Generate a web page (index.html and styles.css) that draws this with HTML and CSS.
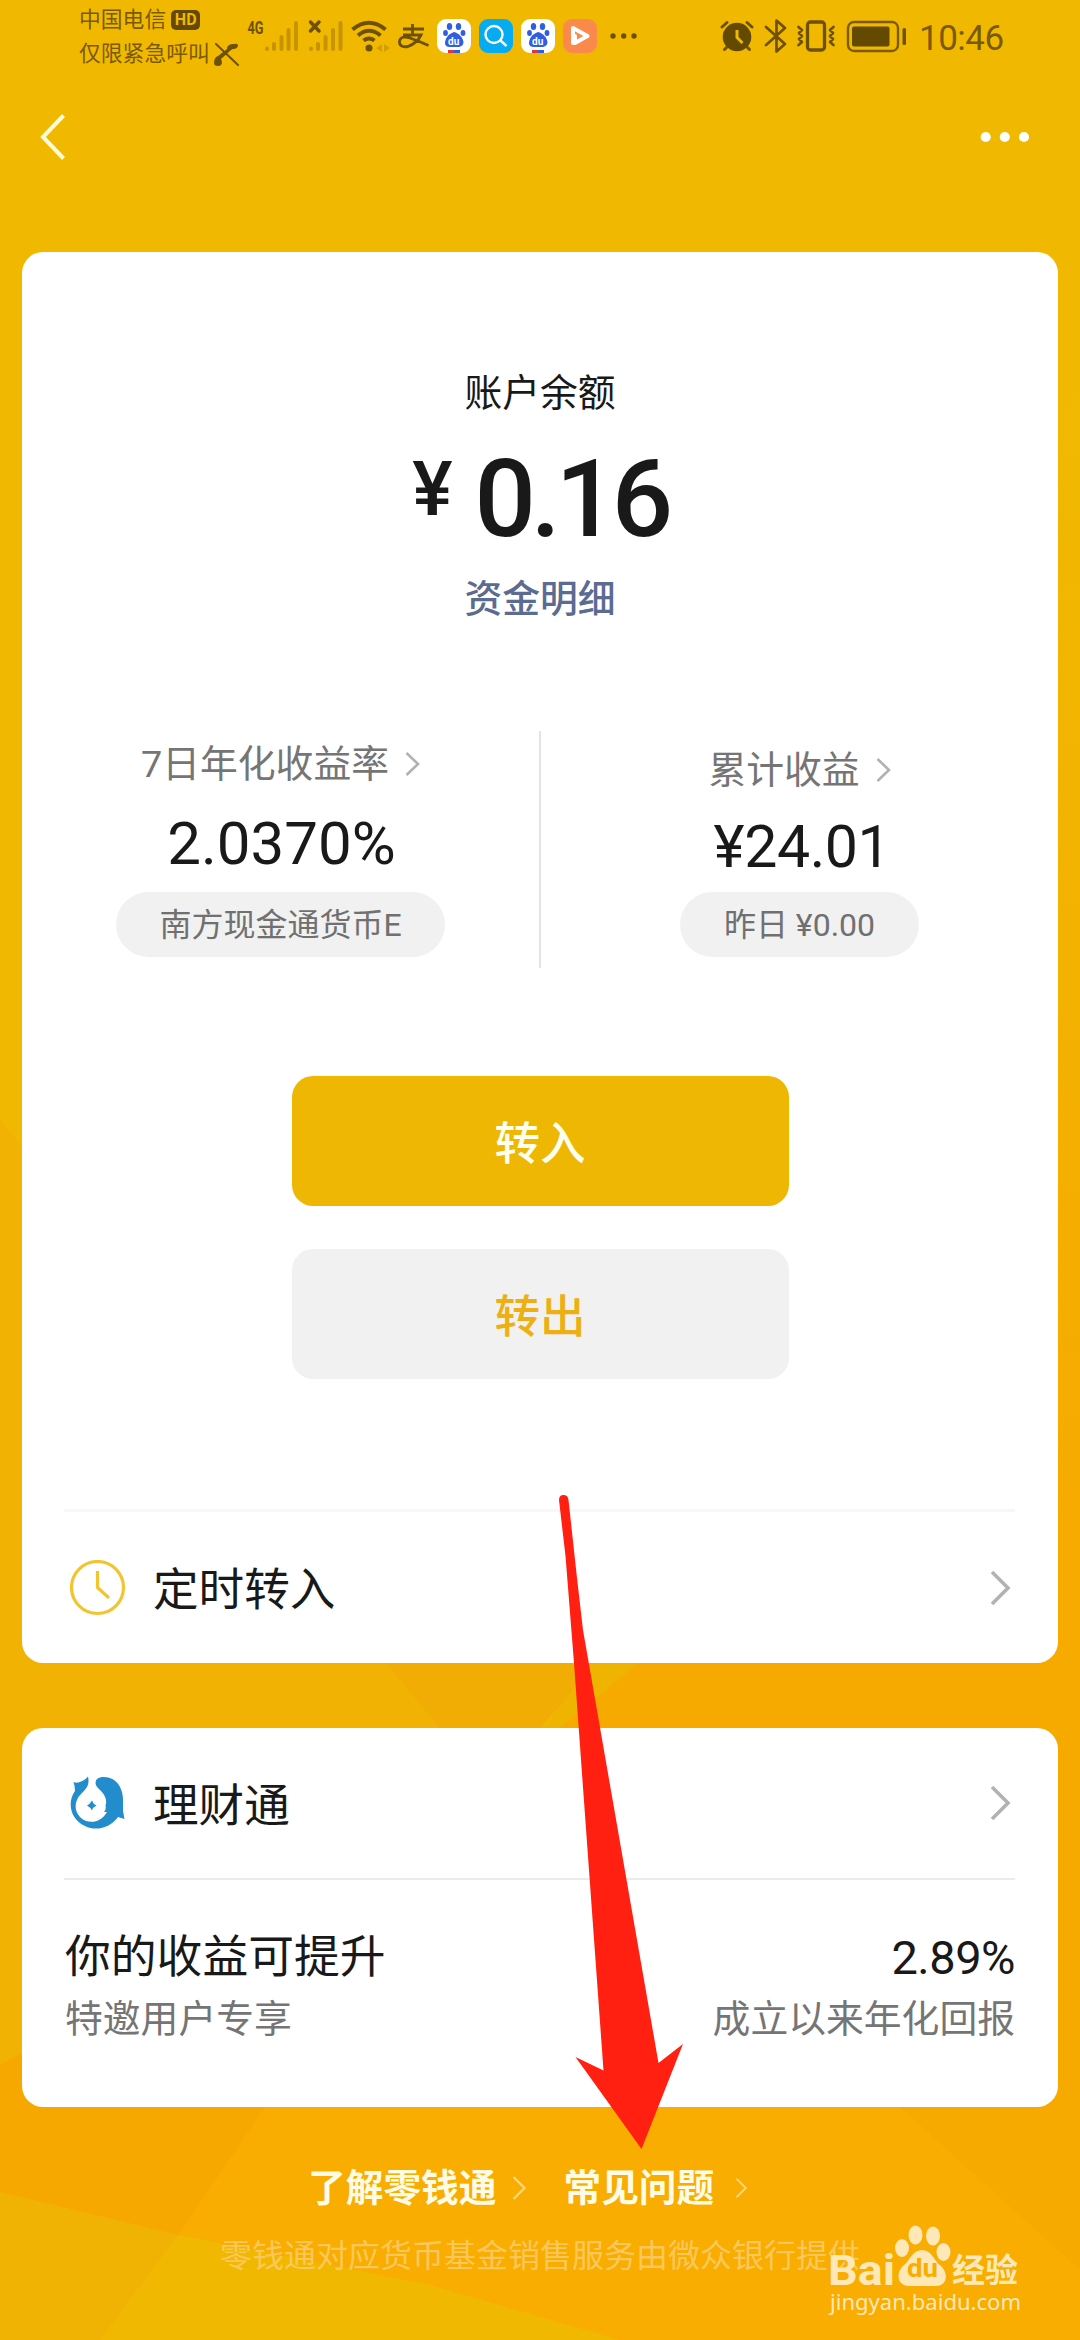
FILE: index.html
```html
<!DOCTYPE html>
<html lang="zh-CN">
<head>
<meta charset="utf-8">
<title>零钱通</title>
<link rel="stylesheet" href="styles.css">
</head>
<body>
<div class="screen">
  <svg class="backdrop" viewBox="0 0 1080 2340" aria-hidden="true">
    <defs>
      <linearGradient id="edge" x1="0" y1="0" x2="0" y2="1">
        <stop offset="0" stop-color="#f0b900"/>
        <stop offset="0.600" stop-color="#f7aa00"/>
        <stop offset="1" stop-color="#f7aa00"/>
      </linearGradient>
    </defs>
    <path d="M0 1120 L400 1600 L560 1740 L0 2065Z" fill="#f1b203"/>
    <path d="M1080 380 L1080 2340 L0 2340 L0 2065 L560 1740 L610 1662Z" fill="url(#edge)"/>
    <path d="M385 1662 L600 1662 L540 1728 L440 1728Z" fill="#f1ad03"/>
    <path d="M592 1662 L640 1662 L560 1728 L545 1728Z" fill="#eeb400"/>
    <path d="M640 1662 L1080 1662 L1080 2340 L0 2340 L0 2065 L30 2060 L560 1728Z" fill="#f8ad00"/>
    <path d="M640 1662 L1080 1662 L1080 2270 L900 2107 L560 1728Z" fill="#f6aa00"/>
    <path d="M0 2065 L30 2050 L265 2107 L178 2235 L0 2192Z" fill="#f6a800"/>
    <path d="M0 2192 L178 2235 L100 2340 L0 2340Z" fill="#f1b303"/>
    <path d="M178 2235 L430 2285 L620 2340 L100 2340Z" fill="#f0b900"/>
  </svg>

  <header class="status">
    <div class="carrier">
      <div class="carrier-line">中国电信<span class="hd">HD</span></div>
      <div class="carrier-line">仅限紧急呼叫<svg class="nocall" viewBox="0 0 26 24"><path d="M2 2L24 23" stroke="#6d5000" stroke-width="2" stroke-linecap="round"/><path d="M20 2C15 2 13 4 13 7L4 14C1 15 0 18 0 21Q0 24 4 24Q8 24 8 20L7 17L17 8L19 7Q24 7 24 3Q23 1 20 2Z" fill="#6d5000"/></svg></div>
    </div>
    <svg width="17" height="72" viewBox="247 0 17 72"><text x="247.500" y="34" font-size="18" font-weight="700" fill="#6d5000" textLength="16" lengthAdjust="spacingAndGlyphs">4G</text></svg>
    <svg width="86" height="72" viewBox="264 0 86 72">
      <g stroke="#c59400" stroke-width="4" stroke-linecap="round"><path d="M267 48.500V49M274 44V49M281.500 37V49M288.500 30V49M296 23V49M311 48.500V49M318 44V49M325.500 37V49M333 30V49M340.500 23V49"/></g>
      <path d="M310.500 22L319 31M319 22L310.500 31" stroke="#6d5000" stroke-width="3.500" stroke-linecap="round"/>
    </svg>
    <svg width="46" height="72" viewBox="350 0 46 72">
      <g fill="none" stroke="#6d5000" stroke-width="4"><path d="M352.500 29.500Q369 16 385.500 29.500M358 35.500Q369 26 380.500 35.500M363.500 40.500Q369 36.500 374.500 40.500"/></g>
      <circle cx="369" cy="48" r="3.500" fill="#6d5000"/>
      <path d="M382 44V52L376 48ZM384 44V52L390 48Z" fill="#d09f00"/>
    </svg>
    <svg width="41" height="72" viewBox="396 0 41 72"><path d="M403 29H424M412.500 24V34M403 35H421Q417 43 408 46.500Q399 48 399.500 41Q401 35 410 38Q421 42 428.500 45.500" fill="none" stroke="#6d5000" stroke-width="2.800"/></svg>
    <svg width="42" height="72" viewBox="437 0 42 72"><g id="paw-app"><rect x="437" y="19" width="34" height="34" rx="9" fill="#fff"/><g fill="#2f5ee4"><ellipse cx="449.500" cy="26.500" rx="2.700" ry="3.600"/><ellipse cx="458.500" cy="26.500" rx="2.700" ry="3.600"/><ellipse cx="445.500" cy="33" rx="2.400" ry="3"/><ellipse cx="463" cy="33" rx="2.400" ry="3"/><path d="M454 32C448 34 445 39 445 43Q445 47 450 47H459Q463.500 46 463.500 42C463 38 459 33 454 32Z"/></g><path d="M448 50H454V53H448Z" fill="#dc3643"/><path d="M454 50H460V53H454Z" fill="#2f5ee4"/><text x="448" y="45" font-size="10" font-weight="700" fill="#fff">du</text></g></svg>
    <svg width="42" height="72" viewBox="479 0 42 72"><rect x="479" y="19" width="34" height="34" rx="9" fill="#05acf2"/><circle cx="494" cy="34.500" r="8.500" fill="none" stroke="#fff" stroke-width="2.400"/><path d="M500.500 40.500L506.500 46" stroke="#fff" stroke-width="2.400"/></svg>
    <svg width="42" height="72" viewBox="437 0 42 72"><use href="#paw-app"/></svg>
    <svg width="42" height="72" viewBox="563 0 42 72"><rect x="563" y="19" width="34" height="34" rx="9" fill="#f98a4b"/><path d="M573 43V28L587.500 36L575 43V36" fill="none" stroke="#fff" stroke-width="4" stroke-linejoin="round" stroke-linecap="round"/></svg>
    <svg width="113" height="72" viewBox="605 0 113 72"><g fill="#6d5000"><circle cx="613" cy="36" r="2.700"/><circle cx="623.700" cy="36" r="2.700"/><circle cx="634" cy="36" r="2.700"/></g></svg>
    <svg width="42" height="72" viewBox="718 0 42 72"><circle cx="737" cy="37" r="14.300" fill="#644900"/><path d="M722 27L727 22.500M752 27L747 22.500M727 47L724.500 49.500M747 47L749.500 49.500" stroke="#6d5000" stroke-width="3" stroke-linecap="round"/><path d="M737 30V37.500L742.500 43" fill="none" stroke="#f0b800" stroke-width="3"/></svg>
    <svg width="34" height="72" viewBox="760 0 34 72"><path d="M766 27L785 44L776.500 51.500V20.500L785 28L766 45" fill="none" stroke="#6d5000" stroke-width="2.700" stroke-linejoin="round" stroke-linecap="round"/></svg>
    <svg width="50" height="72" viewBox="794 0 50 72"><g fill="none" stroke="#6d5000" stroke-linejoin="round" stroke-linecap="round"><rect x="807.500" y="22" width="17" height="28" rx="3" stroke-width="3.300"/><path d="M798.500 27L802 30L799 33L802 36L799 39L802 42L798.500 45M833.500 27L830 30L833 33L830 36L833 39L830 42L833.500 45" stroke-width="2.700"/></g></svg>
    <svg width="74" height="72" viewBox="844 0 74 72"><rect x="848" y="22" width="50" height="29" rx="6" fill="none" stroke="#7b5a00" stroke-width="2.400"/><rect x="852" y="26.500" width="37.500" height="20" rx="2" fill="#644900"/><rect x="902.500" y="28" width="3.500" height="17" rx="1.500" fill="#6d5000"/></svg>
    <span class="time">10:46</span>
  </header>

  <nav class="nav">
    <svg width="30" height="52" viewBox="38 111 30 52"><path d="M63.500 115.500L43 137L63.500 158.500" fill="none" stroke="#fffbd6" stroke-width="4"/></svg>
    <svg width="52" height="14" viewBox="978 130 52 14"><g fill="#fff"><circle cx="985.700" cy="137" r="5.100"/><circle cx="1004.800" cy="137" r="5.100"/><circle cx="1024" cy="137" r="5.100"/></g></svg>
  </nav>

  <main class="card balance">
    <div class="label">账户余额</div>
    <div class="amount"><span class="yen">¥</span><span class="value">0.16</span></div>
    <a class="detail">资金明细</a>
    <section class="stats">
      <div class="stat stat-rate">
        <div class="stat-label">7日年化收益率<svg class="small-arrow" viewBox="0 0 15 26"><path d="M1.500 2L13 13L1.500 24" /></svg></div>
        <div class="stat-value">2.0370%</div>
        <div class="pill">南方现金通货币E</div>
      </div>
      <div class="stat stat-total">
        <div class="stat-label">累计收益<svg class="small-arrow" viewBox="0 0 15 26"><path d="M1.500 2L13 13L1.500 24" /></svg></div>
        <div class="stat-value">¥24.01</div>
        <div class="pill pill-day">昨日 ¥0.00</div>
      </div>
    </section>
    <div class="actions">
      <button class="btn btn-in">转入</button>
      <button class="btn btn-out">转出</button>
    </div>
    <div class="row row-timer">
      <svg class="row-icon" viewBox="70 1560 56 56"><circle cx="97.500" cy="1587.500" r="26" fill="none" stroke="#f2c530" stroke-width="3.200"/><path d="M97.500 1571V1587.500L109 1598" fill="none" stroke="#f2c530" stroke-width="3.200"/></svg>
      <span class="row-title">定时转入</span>
      <svg class="arrow" viewBox="0 0 22 38"><path d="M2 3L18 19L2 35"/></svg>
    </div>
  </main>

  <section class="card wealth">
    <div class="row">
      <svg class="row-icon" viewBox="70 1775 56 56"><path d="M73.500 1782C78 1784 84 1781 88 1776.500C90 1785 86 1789 81 1794C74 1801 74 1811 80 1817C88 1825 101 1823 107 1812L104 1812Q106.500 1809 105.500 1806C108 1798 103 1793 99 1789C94 1785 94 1778 102 1777C116 1776 124 1788 123 1803V1811L124.500 1819L118 1817C111 1827 97 1832 85 1826C70 1819 67 1802 75 1791Q75 1786 73.500 1782Z" fill="#238ccd"/><path d="M92 1800.500Q93 1804 96.500 1805.500Q93 1807 92 1810.500Q90 1807 87 1805.500Q90 1804 92 1800.500Z" fill="#238ccd"/></svg>
      <span class="row-title">理财通</span>
      <svg class="arrow" viewBox="0 0 22 38"><path d="M2 3L18 19L2 35"/></svg>
    </div>
    <div class="promo">
      <div class="promo-line"><span>你的收益可提升</span><span class="promo-rate">2.89%</span></div>
      <div class="promo-note"><span>特邀用户专享</span><span>成立以来年化回报</span></div>
    </div>
  </section>

  <footer class="footer">
    <div class="links">
      <a class="link">了解零钱通</a><svg class="link-arrow" viewBox="0 0 15 26"><path d="M1.500 2L12.500 13L1.500 24"/></svg>
      <a class="link">常见问题</a><svg class="link-arrow link-arrow-last" viewBox="0 0 15 26"><path d="M1.500 2L12.500 13L1.500 24"/></svg>
    </div>
    <div class="notice">零钱通对应货币基金销售服务由微众银行提供</div>
  </footer>

  <svg class="overlay" viewBox="0 0 1080 2340">
    <path d="M559 1500Q559 1495 563.500 1495Q568 1495 568.500 1500L577 1578L583 1630L658.500 2063L683 2044L641.500 2149L575.500 2057L603.500 2070.500L574 1663L565.500 1556Z" fill="#ff2012"/>
    <g class="watermark" fill="#ffe8b8">
      <text x="828" y="2285" font-size="43" font-weight="700" textLength="67" lengthAdjust="spacingAndGlyphs">Bai</text>
      <ellipse cx="902" cy="2248" rx="7" ry="9"/>
      <ellipse cx="915.500" cy="2235" rx="7" ry="9.500"/>
      <ellipse cx="933" cy="2236" rx="7" ry="9.500"/>
      <ellipse cx="943.500" cy="2252" rx="7" ry="9"/>
      <path d="M922 2250C911 2251 911 2260 903 2266C895 2274 898 2286 909 2286H936C947 2286 949 2274 941 2266C933 2260 933 2251 922 2250Z"/>
      <text x="907" y="2277" font-size="25" font-weight="700" fill="#f8ad00" textLength="31" lengthAdjust="spacingAndGlyphs">du</text>
      <text x="952" y="2282" font-size="33" font-weight="700" textLength="66" lengthAdjust="spacingAndGlyphs">经验</text>
      <text class="site" x="830" y="2310" font-size="22" textLength="191">jingyan.baidu.com</text>
    </g>
  </svg>
</div>
</body>
</html>
```
FILE: styles.css
```css
* { box-sizing: border-box; }

body {
  margin: 0;
  font-family: Roboto, "Noto Sans CJK SC", sans-serif;
  color: #191919;
}

.screen {
  position: relative;
  width: 1080px;
  height: 2340px;
  overflow: hidden;
  background: #f0b900;
}

.backdrop, .overlay {
  position: absolute;
  left: 0;
  top: 0;
  width: 1080px;
  height: 2340px;
}

.overlay { pointer-events: none; }
.site { font-family: "Noto Sans", sans-serif; }

.status, .nav, .card, .footer { position: relative; }

svg { display: block; flex: none; }

/* status bar */
.status {
  display: flex;
  height: 72px;
  padding-left: 79px;
  color: #7a5a00;
}

.carrier { width: 168px; padding-top: 3px; }

.carrier-line {
  display: flex;
  align-items: center;
  height: 34px;
  font-size: 21.8px;
  line-height: 34px;
  white-space: nowrap;
}

.hd {
  width: 29px;
  height: 20px;
  margin-left: 5px;
  border-radius: 5px;
  background: #644900;
  color: #f0b900;
  font-size: 16px;
  font-weight: 700;
  line-height: 20px;
  text-align: center;
}

.nocall { width: 26px; height: 24px; margin-left: 4px; }

.time {
  padding-left: 1px;
  font-size: 35px;
  line-height: 77px;
  letter-spacing: -0.5px;
}

/* navigation bar */
.nav {
  display: flex;
  align-items: center;
  justify-content: space-between;
  height: 130px;
  padding: 0 50px 0 38px;
}

/* cards */
.card {
  margin: 0 22px;
  border-radius: 21px;
  background: #fff;
}

.balance {
  height: 1411px;
  margin-top: 50px;
  padding-top: 114px;
}

.label, .detail {
  display: block;
  height: 54px;
  font-size: 37.8px;
  line-height: 54px;
  text-align: center;
}

.detail {
  margin-top: 13px;
  font-weight: 500;
  color: #5b6b92;
}

.amount {
  display: flex;
  justify-content: center;
  height: 120px;
  margin-top: 19px;
  font-weight: 500;
  line-height: 120px;
}

.yen { margin-right: 22px; font-size: 76px; line-height: 100px; }
.value { font-size: 108px; letter-spacing: -5.2px; }

.stats {
  position: relative;
  display: flex;
  height: 237px;
  margin-top: 105px;
}

.stat {
  display: flex;
  flex: 1;
  flex-direction: column;
  align-items: center;
}

.stat-rate { padding-top: 6px; border-right: 2px solid #e3e3e3; }
.stat-total { padding-top: 12px; }

.stat-label {
  display: flex;
  align-items: center;
  height: 54px;
  font-size: 37.8px;
  line-height: 54px;
  color: #757575;
}

.small-arrow { width: 15px; height: 26px; margin-left: 16px; }

.small-arrow path, .arrow path, .link-arrow path {
  fill: none;
  stroke: #b2b2b2;
  stroke-width: 2.6;
}

.stat-value {
  height: 70px;
  margin-top: 18px;
  padding-left: 2px;
  font-size: 60px;
  line-height: 70px;
}

.stat-total .stat-value { margin-top: 15px; padding-left: 5px; font-size: 59px; letter-spacing: -0.4px; }

.pill {
  width: 329px;
  height: 65px;
  margin-top: 13px;
  border-radius: 33px;
  background: #f1f1f1;
  font-size: 32px;
  line-height: 66px;
  text-align: center;
  color: #707070;
}

.pill-day { width: 239px; margin-top: 10px; }

.actions {
  display: flex;
  flex-direction: column;
  align-items: center;
  gap: 43px;
  margin-top: 108px;
}

.btn {
  width: 497px;
  height: 130px;
  padding: 8px 0 0;
  border: 0;
  border-radius: 21px;
  font: inherit;
  font-size: 45.6px;
  font-weight: 500;
  line-height: 122px;
}

.btn-in { background: #edb703; color: #fffff0; }
.btn-out { background: #f1f1f1; color: #edb014; }

.row {
  display: flex;
  align-items: center;
  height: 152px;
  margin: 0 43px 0 42px;
  border-bottom: 2px solid #ebebeb;
}

.row-timer {
  height: 154px;
  margin-top: 130px;
  border-top: 3px solid #f7f7f7;
  border-bottom: 0;
}

.row-icon { width: 56px; height: 56px; margin-left: 6px; }
.row-title { margin: 7px 0 0 27px; font-size: 45.6px; line-height: 60px; }
.arrow { width: 22px; height: 38px; margin-left: auto; margin-right: 3px; }
.arrow path { stroke-width: 3.6; }

.wealth { height: 379px; margin-top: 65px; }

.promo { padding: 48px 43px 0 43px; }

.promo-line, .promo-note {
  display: flex;
  justify-content: space-between;
}

.promo-line { font-size: 45.8px; line-height: 60px; }
.promo-rate { font-size: 47px; letter-spacing: -0.5px; }

.promo-note {
  margin-top: 4px;
  font-size: 37.8px;
  line-height: 54px;
  color: #757575;
}

/* footer */
.footer { padding-top: 54px; }

.links {
  display: flex;
  align-items: center;
  padding-left: 308px;
  font-size: 37.7px;
  font-weight: 700;
  line-height: 54px;
  color: #fffbe6;
}

.link-arrow { width: 15px; height: 26px; margin: 0 36px 0 16px; }
.link-arrow path { stroke: #fcd97a; stroke-width: 2.2; }
.link-arrow-last { width: 13px; height: 22px; margin-left: 21px; }

.notice {
  margin-top: 18px;
  padding-left: 220px;
  font-size: 32px;
  line-height: 46px;
  color: #fac85a;
}
```
